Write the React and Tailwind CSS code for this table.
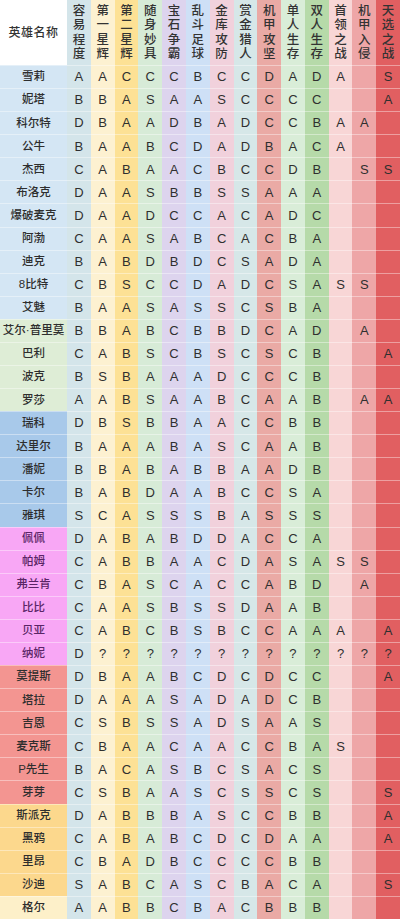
import React from 'react';

const columns = [
  { title: '容易程度', bg: 'bg-[#d4e5ea]' },
  { title: '第一星辉', bg: 'bg-[#fdf1d1]' },
  { title: '第二星辉', bg: 'bg-[#fde195]' },
  { title: '随身妙具', bg: 'bg-[#d7ebd7]' },
  { title: '宝石争霸', bg: 'bg-[#ddd4ee]' },
  { title: '乱斗足球', bg: 'bg-[#cee0f6]' },
  { title: '金库攻防', bg: 'bg-[#f1d1dc]' },
  { title: '赏金猎人', bg: 'bg-[#d6e7e8]' },
  { title: '机甲攻坚', bg: 'bg-[#eaaaa5]' },
  { title: '单人生存', bg: 'bg-[#d9edd8]' },
  { title: '双人生存', bg: 'bg-[#b6daa9]' },
  { title: '首领之战', bg: 'bg-[#f8d6d6]' },
  { title: '机甲入侵', bg: 'bg-[#eea6a7]' },
  { title: '天选之战', bg: 'bg-[#e15f61]' },
];

const groups = {
  blue: 'bg-[#d4e6f4] text-[#2e2e2e]',
  green: 'bg-[#deedd6] text-[#2e2e2e]',
  darkBlue: 'bg-[#a8c9ea] text-[#2e2e2e]',
  pink: 'bg-[#f8a7f5] text-[#5a2566]',
  red: 'bg-[#f39591] text-[#2e2e2e]',
  yellow: 'bg-[#fcd88d] text-[#2e2e2e]',
  cream: 'bg-[#fdf0c9] text-[#2e2e2e]',
};

// '-' = empty cell
const heroes = [
  ['雪莉', 'blue', 'AACCCBCCDADA-S'],
  ['妮塔', 'blue', 'BBASAASCCCC--A'],
  ['科尔特', 'blue', 'DBAADBADCCBAA-'],
  ['公牛', 'blue', 'BAABCDADBACA--'],
  ['杰西', 'blue', 'CABAACBCCDB-SS'],
  ['布洛克', 'blue', 'DAASBBSSAAA---'],
  ['爆破麦克', 'blue', 'DAADCCACADC---'],
  ['阿渤', 'blue', 'CAASABCACBA---'],
  ['迪克', 'blue', 'BABDBDCSADA---'],
  ['8比特', 'blue', 'CBSCCDADCSASS-'],
  ['艾魅', 'blue', 'BAASASSCSBA---'],
  ['艾尔·普里莫', 'green', 'BBABCBBDCAD-A-'],
  ['巴利', 'green', 'CABSCBSCSCB--A'],
  ['波克', 'green', 'BSBAAADCCCB---'],
  ['罗莎', 'green', 'AABSAABCAAB-AA'],
  ['瑞科', 'darkBlue', 'DBSBBAACCBB---'],
  ['达里尔', 'darkBlue', 'BAAABASCAAB---'],
  ['潘妮', 'darkBlue', 'BBABABBAADB---'],
  ['卡尔', 'darkBlue', 'BABDAABCCSA---'],
  ['雅琪', 'darkBlue', 'SCASSSBASSS---'],
  ['佩佩', 'pink', 'DABABDDACCA---'],
  ['帕姆', 'pink', 'CABBAACDASASS-'],
  ['弗兰肯', 'pink', 'CBASCACCABD-A-'],
  ['比比', 'pink', 'CAASBSSDAAB---'],
  ['贝亚', 'pink', 'CABCBSBCCAAA-A'],
  ['纳妮', 'pink', 'D?????????????'],
  ['莫提斯', 'red', 'DBAABCDCDCC--A'],
  ['塔拉', 'red', 'DAAASADADCB---'],
  ['吉恩', 'red', 'CSBSSADSAAS---'],
  ['麦克斯', 'red', 'CBAACAACCBAS--'],
  ['P先生', 'red', 'BACASBCSACS---'],
  ['芽芽', 'red', 'CSBAASCSSCS--S'],
  ['斯派克', 'yellow', 'DABBBASCCBB--A'],
  ['黑鸦', 'yellow', 'CABABCDCDAA--A'],
  ['里昂', 'yellow', 'CBADBCCCCBB---'],
  ['沙迪', 'yellow', 'SABCASCBACA--S'],
  ['格尔', 'cream', 'AABBCBACBBB---'],
];

const font = { fontFamily: '"Liberation Sans", "Noto Sans CJK SC", sans-serif' };

export default function App() {
  return (
    <div className="w-[400px] h-[919px] overflow-hidden bg-white" style={font}>
      <div className="grid grid-cols-[67px_repeat(14,minmax(0,1fr))]">
        {/* header */}
        <div className="h-[65px] bg-white flex items-center justify-center text-[12px] font-medium text-[#333] tracking-[0.5px]">
          英雄名称
        </div>
        {columns.map((c) => (
          <div
            key={c.title}
            className={`h-[65px] ${c.bg} flex flex-col items-center pt-[4px] text-[12.5px] font-medium leading-[14.3px] text-[#333]`}
          >
            {c.title.split('').map((ch, i) => (
              <span key={i}>{ch}</span>
            ))}
          </div>
        ))}

        {/* rows */}
        {heroes.map(([name, group, grades]) => (
          <React.Fragment key={name}>
            <div
              className={`h-[23.08px] ${groups[group]} border-t border-white/40 flex items-center justify-center text-[11.5px] font-medium whitespace-nowrap`}
            >
              {name}
            </div>
            {grades.split('').map((g, i) => (
              <div
                key={i}
                className={`h-[23.08px] ${columns[i].bg} border-t border-white/40 flex items-center justify-center text-[13px] text-[#2f2f2f]`}
              >
                {g === '-' ? '' : g}
              </div>
            ))}
          </React.Fragment>
        ))}
      </div>
    </div>
  );
}
